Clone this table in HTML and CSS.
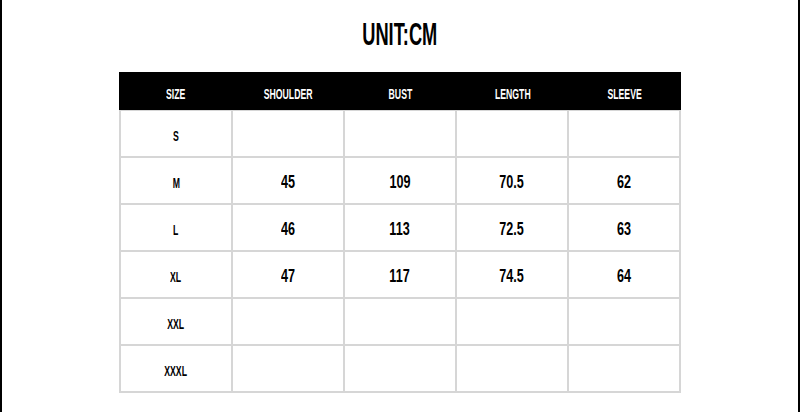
FILE: index.html
```html
<!DOCTYPE html>
<html>
<head>
<meta charset="utf-8">
<link rel="stylesheet" href="styles.css">
</head>
<body>
<div class="page">
  <h1 class="title"><span class="sq sq-title">UNIT:CM</span></h1>
  <div class="chart">
    <div class="head">
      <div class="hcell"><span class="sq">SIZE</span></div>
      <div class="hcell"><span class="sq">SHOULDER</span></div>
      <div class="hcell"><span class="sq">BUST</span></div>
      <div class="hcell"><span class="sq">LENGTH</span></div>
      <div class="hcell"><span class="sq">SLEEVE</span></div>
    </div>
    <div class="grid">
      <div class="cell size"><span class="sq">S</span></div>
      <div class="cell"></div><div class="cell"></div><div class="cell"></div><div class="cell"></div>

      <div class="cell size"><span class="sq">M</span></div>
      <div class="cell num"><span class="sq sq-num">45</span></div>
      <div class="cell num"><span class="sq sq-num">109</span></div>
      <div class="cell num"><span class="sq sq-num">70.5</span></div>
      <div class="cell num"><span class="sq sq-num">62</span></div>

      <div class="cell size"><span class="sq">L</span></div>
      <div class="cell num"><span class="sq sq-num">46</span></div>
      <div class="cell num"><span class="sq sq-num">113</span></div>
      <div class="cell num"><span class="sq sq-num">72.5</span></div>
      <div class="cell num"><span class="sq sq-num">63</span></div>

      <div class="cell size"><span class="sq">XL</span></div>
      <div class="cell num"><span class="sq sq-num">47</span></div>
      <div class="cell num"><span class="sq sq-num">117</span></div>
      <div class="cell num"><span class="sq sq-num">74.5</span></div>
      <div class="cell num"><span class="sq sq-num">64</span></div>

      <div class="cell size"><span class="sq">XXL</span></div>
      <div class="cell"></div><div class="cell"></div><div class="cell"></div><div class="cell"></div>

      <div class="cell size"><span class="sq">XXXL</span></div>
      <div class="cell"></div><div class="cell"></div><div class="cell"></div><div class="cell"></div>
    </div>
  </div>
</div>
</body>
</html>
```
FILE: styles.css
```css
html, body {
  margin: 0;
  padding: 0;
  background: #fff;
}
body {
  font-family: "Liberation Sans", Arial, sans-serif;
  font-weight: bold;
  color: #000;
}
.page {
  box-sizing: border-box;
  width: 800px;
  height: 412px;
  border-left: 2px solid #000;
  border-right: 2px solid #000;
  padding-top: 16px;
  overflow: hidden;
}
.title {
  margin: 0;
  height: 56px;
  font-size: 32px;
  line-height: 37px;
  text-align: center;
  font-weight: bold;
}
.sq {
  display: inline-block;
  transform: scaleX(0.58);
}
.sq-title {
  transform: scaleX(0.57);
}
.sq-num {
  transform: scaleX(0.7);
}
.chart {
  width: 562px;
  margin: 0 auto;
}
.head {
  display: grid;
  grid-template-columns: repeat(5, 1fr);
  height: 38px;
  background: #000;
  color: #fff;
}
.hcell {
  display: flex;
  align-items: center;
  justify-content: center;
  font-size: 15px;
  padding-top: 4px;
}
.grid {
  display: grid;
  grid-template-columns: repeat(5, 1fr);
  grid-auto-rows: 45px;
  gap: 2px;
  padding: 1px 2px 2px 2px;
  background: #d6d6d6;
}
.cell {
  background: #fff;
  display: flex;
  align-items: center;
  justify-content: center;
  padding-top: 4px;
  box-sizing: border-box;
}
.size {
  font-size: 15px;
}
.num {
  font-size: 18px;
}
```
